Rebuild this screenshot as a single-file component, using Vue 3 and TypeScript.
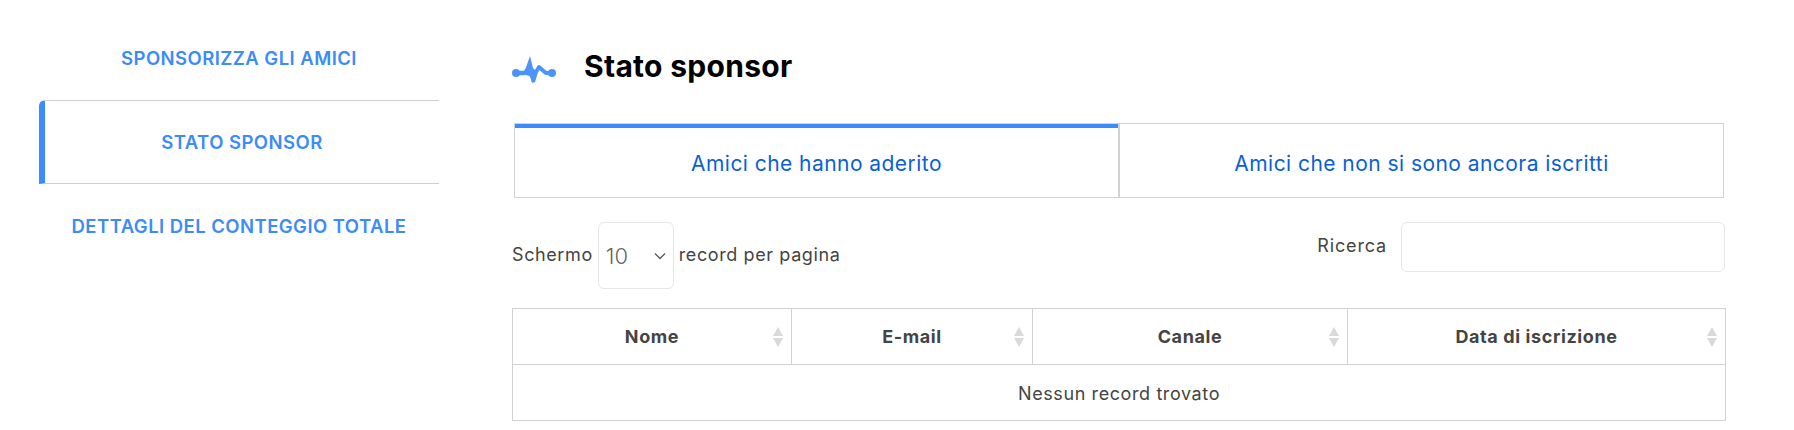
<template>
  <div class="page">
    <nav class="side-nav">
      <a
        v-for="item in navItems"
        :key="item"
        class="nav-item"
        :class="{ active: item === activeNav }"
      >{{ item }}</a>
    </nav>

    <main class="content">
      <div class="title-row">
        <svg class="pulse" width="46" height="30" viewBox="0 0 46 30">
          <path d="M4 15.800H12L14 12.500L18 1L21 13L24 16L21 29L17.500 21L14 20L11 20.200H4Z" fill="#4c94fb" />
          <path d="M21 27L24 17L27 12L31 15.500L34 18H40" fill="none" stroke="#4c94fb" stroke-width="4" stroke-linejoin="round" />
          <circle cx="4" cy="18" r="4" fill="#4c94fb" />
          <circle cx="40" cy="18" r="4" fill="#4c94fb" />
        </svg>
        <h1>Stato sponsor</h1>
      </div>

      <div class="tabs">
        <a class="tab selected">Amici che hanno aderito</a>
        <a class="tab">Amici che non si sono ancora iscritti</a>
      </div>

      <div class="controls">
        <div class="length">
          <span class="label">Schermo</span>
          <div class="select-box">
            <span>10</span>
            <svg width="12" height="8" viewBox="0 0 12 8">
              <path d="M1 1.500L6 6.500L11 1.500" fill="none" stroke="#555" stroke-width="1.300" />
            </svg>
          </div>
          <span class="label">record per pagina</span>
        </div>
        <div class="search">
          <label for="search-box">Ricerca</label>
          <input id="search-box" type="text" />
        </div>
      </div>

      <table class="records">
        <thead>
          <tr>
            <th v-for="col in columns" :key="col.name" :style="{ width: col.width + 'px' }">
              {{ col.name }}
              <span class="sort">
                <i class="up"></i>
                <i class="down"></i>
              </span>
            </th>
          </tr>
        </thead>
        <tbody>
          <tr>
            <td :colspan="columns.length">Nessun record trovato</td>
          </tr>
        </tbody>
      </table>
    </main>
  </div>
</template>

<script setup lang="ts">
const navItems: string[] = ['SPONSORIZZA GLI AMICI', 'STATO SPONSOR', 'DETTAGLI DEL CONTEGGIO TOTALE']
const activeNav = 'STATO SPONSOR'

const columns = [
  { name: 'Nome', width: 279 },
  { name: 'E-mail', width: 241 },
  { name: 'Canale', width: 315 },
  { name: 'Data di iscrizione', width: 378 }
]
</script>

<style>
html,
body {
  margin: 0;
  background: #fff;
  overflow: hidden;
}
</style>

<style scoped>
.page {
  display: flex;
  height: 430px;
  padding-left: 39px;
  font-family: Inter, "Liberation Sans", sans-serif;
  color: #444;
  box-sizing: border-box;
}

.side-nav {
  width: 400px;
  padding-top: 16px;
  flex-shrink: 0;
}

.nav-item {
  display: flex;
  align-items: center;
  justify-content: center;
  height: 84px;
  box-sizing: border-box;
  font-size: 18.500px;
  font-weight: 600;
  letter-spacing: 0.45px;
  color: #3c8bfb;
}

.nav-item.active {
  border-top: 1px solid #cfcfcf;
  border-bottom: 1px solid #cfcfcf;
  border-left: 6px solid #3c8bfb;
  border-top-left-radius: 6px;
}

.content {
  width: 1213px;
  margin-left: 73px;
}

.title-row {
  display: flex;
  align-items: center;
  gap: 26px;
  height: 123px;
  padding-top: 8px;
  box-sizing: border-box;
}

.pulse {
  filter: blur(0.6px);
  margin-top: 8px;
}

h1 {
  margin: 0;
  font-size: 30px;
  font-weight: 700;
  letter-spacing: 0.3px;
  color: #000;
}

.tabs {
  display: flex;
  margin-left: 2px;
  margin-right: 1px;
}

.tab {
  flex: 1;
  display: flex;
  align-items: center;
  justify-content: center;
  height: 75px;
  padding-top: 6px;
  box-sizing: border-box;
  border: 1px solid #d2d2d2;
  font-size: 21px;
  letter-spacing: 0.45px;
  color: #0a5fd8;
}

.tab.selected {
  box-shadow: inset 0 4px 0 #3c8bfb;
}

.controls {
  display: flex;
  justify-content: space-between;
  align-items: flex-start;
  margin-top: 24px;
  font-size: 18px;
  letter-spacing: 0.6px;
}

.length {
  display: flex;
  align-items: center;
  gap: 5px;
}

.label {
  padding-bottom: 3px;
}

.select-box {
  display: flex;
  align-items: center;
  justify-content: space-between;
  width: 76px;
  height: 67px;
  padding: 0 7px;
  box-sizing: border-box;
  border: 1px solid #e6e6e6;
  border-radius: 6px;
  font-size: 22px;
  font-weight: 300;
  letter-spacing: 0;
  color: #666;
}

.search {
  display: flex;
  align-items: center;
  gap: 14px;
}

.search label {
  padding-bottom: 3px;
  letter-spacing: 0.85px;
}

.search input {
  width: 324px;
  height: 50px;
  padding: 0 10px;
  box-sizing: border-box;
  border: 1px solid #e6e6e6;
  border-radius: 6px;
  outline: none;
}

.records {
  width: 100%;
  margin-top: 19px;
  border-collapse: collapse;
  table-layout: fixed;
  font-size: 18px;
  letter-spacing: 0.6px;
}

.records th,
.records td {
  height: 56px;
  padding: 0;
  border: 1px solid #d2d2d2;
  text-align: center;
  box-sizing: border-box;
}

.records td {
  padding-top: 2px;
}

.records th {
  position: relative;
  font-weight: 700;
}

.sort {
  position: absolute;
  top: 18px;
  right: 8px;
  display: flex;
  flex-direction: column;
  gap: 2px;
}

.sort i {
  display: block;
  border-left: 5.500px solid transparent;
  border-right: 5.500px solid transparent;
}

.sort .up {
  border-bottom: 9px solid #d9d9d9;
}

.sort .down {
  border-top: 9px solid #d9d9d9;
}
</style>
